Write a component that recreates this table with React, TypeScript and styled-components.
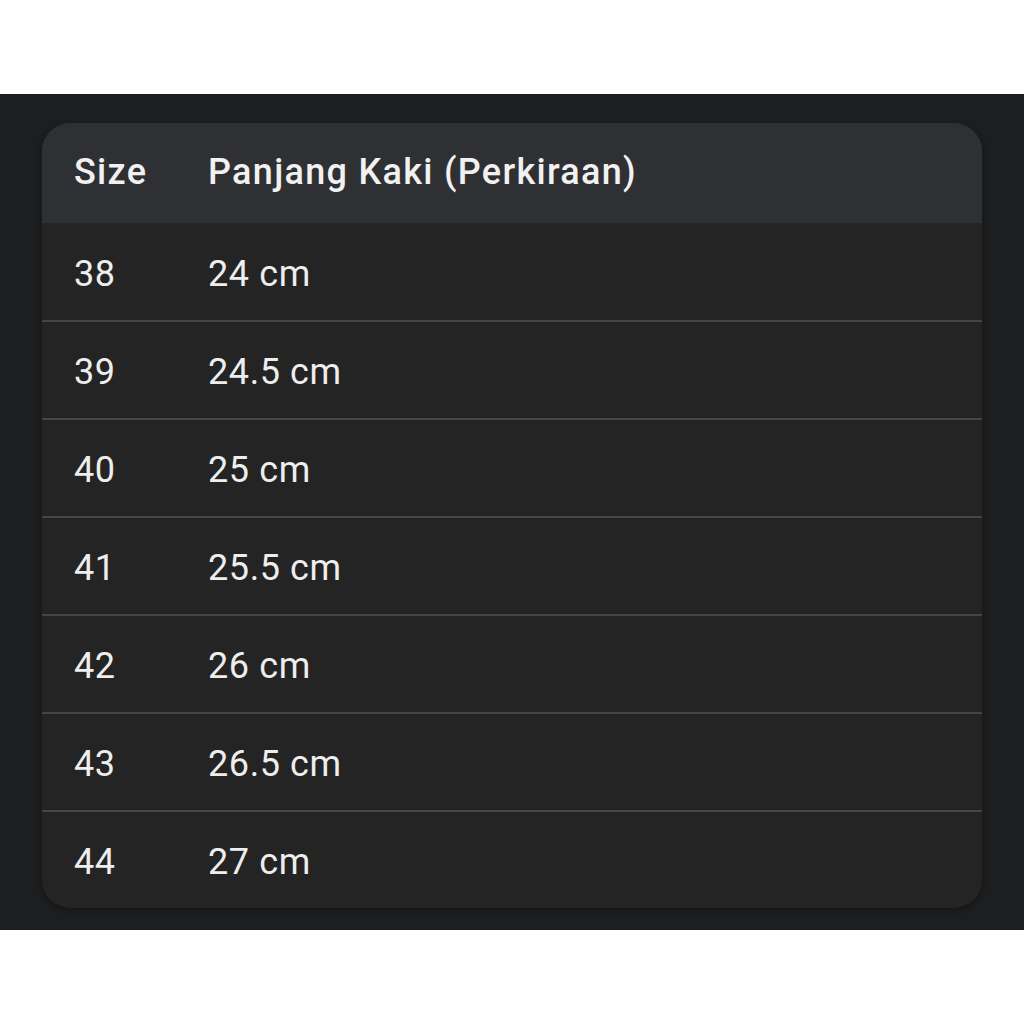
import React from "react";
import styled, { createGlobalStyle } from "styled-components";

const GlobalStyle = createGlobalStyle`
  html, body {
    margin: 0;
    padding: 0;
    background: #ffffff;
  }
  body {
    font-family: Roboto, "Open Sans", "Liberation Sans", sans-serif;
  }
`;

const Page = styled.div`
  width: 1024px;
  height: 1024px;
  padding-top: 94px;
  box-sizing: border-box;
`;

const Band = styled.div`
  height: 836px;
  background: #1d1e20;
  padding: 29px 42px 0 42px;
  box-sizing: border-box;
`;

const Card = styled.div`
  width: 940px;
  border-radius: 28px;
  overflow: hidden;
  background: #242424;
  box-shadow: 0 2px 6px rgba(0, 0, 0, 0.35);
`;

const HeaderRow = styled.div`
  display: flex;
  align-items: center;
  height: 100px;
  background: #2f3033;
  color: #f1f1f1;
  font-weight: 500;
  padding-bottom: 2px;
  box-sizing: border-box;
`;

const Row = styled.div<{ $first?: boolean }>`
  display: flex;
  align-items: center;
  height: ${(p) => (p.$first ? 97 : 98)}px;
  border-top: ${(p) => (p.$first ? "none" : "2px solid #444546")};
  color: #eeeeee;
  font-weight: 400;
  box-sizing: border-box;
  padding-top: 4px;
`;

const SizeCell = styled.div<{ $head?: boolean }>`
  width: 134px;
  padding-left: 32px;
  font-size: 36px;
  letter-spacing: ${(p) => (p.$head ? "1.3px" : "0.6px")};
`;

const LengthCell = styled.div<{ $head?: boolean }>`
  flex: 1;
  font-size: 36px;
  letter-spacing: ${(p) => (p.$head ? "1.3px" : "0.6px")};
`;

const rows = [
  { size: "38", length: "24 cm" },
  { size: "39", length: "24.5 cm" },
  { size: "40", length: "25 cm" },
  { size: "41", length: "25.5 cm" },
  { size: "42", length: "26 cm" },
  { size: "43", length: "26.5 cm" },
  { size: "44", length: "27 cm" },
];

export default function App() {
  return (
    <Page>
      <GlobalStyle />
      <Band>
        <Card>
          <HeaderRow>
            <SizeCell $head>Size</SizeCell>
            <LengthCell $head>Panjang Kaki (Perkiraan)</LengthCell>
          </HeaderRow>
          {rows.map((r, i) => (
            <Row key={r.size} $first={i === 0}>
              <SizeCell>{r.size}</SizeCell>
              <LengthCell>{r.length}</LengthCell>
            </Row>
          ))}
        </Card>
      </Band>
    </Page>
  );
}
